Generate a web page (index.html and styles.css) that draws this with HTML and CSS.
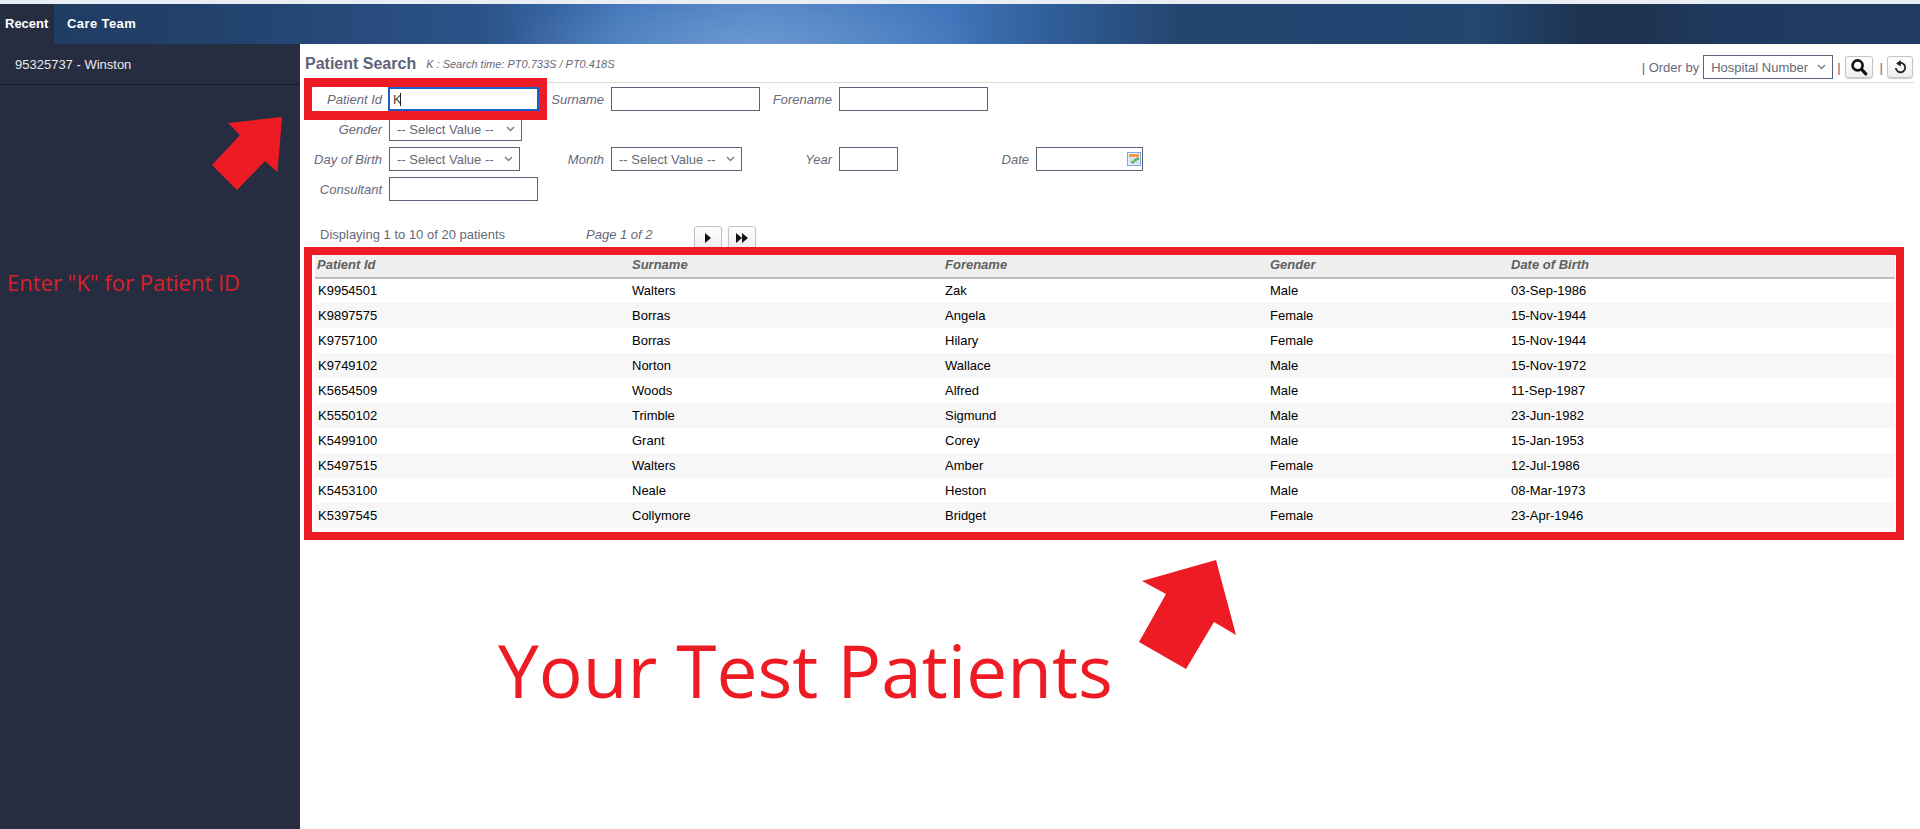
FILE: index.html
```html
<!DOCTYPE html>
<html lang="en">
<head>
<meta charset="utf-8">
<title>Patient Search</title>
<link rel="stylesheet" href="styles.css">
</head>
<body>
<div class="app">
  <header class="topbar">
    <a class="tab tab-active">Recent</a>
    <a class="tab tab-care">Care Team</a>
  </header>
  <div class="body">
    <aside class="sidebar">
      <div class="side-item">95325737 - Winston</div>
    </aside>
    <main class="content">
      <div class="title-bar">
        <h1 class="title">Patient Search</h1>
        <span class="search-time">K : Search time: PT0.733S / PT0.418S</span>
        <div class="order">
          <span>| Order by</span>
          <select class="field sel sel-order"><option>Hospital Number</option></select>
          <span>|</span>
          <button class="btn btn-search"><svg width="18" height="18" viewBox="0 0 18 18"><circle cx="7.6" cy="7.4" r="5" fill="none" stroke="#111" stroke-width="2.6"/><path d="M11.4 11.2l4.4 4.6" stroke="#111" stroke-width="3.2" stroke-linecap="round"/></svg></button>
          <span>|</span>
          <button class="btn btn-reset"><svg width="16" height="16" viewBox="0 0 16 16"><path d="M5.4 5a4.7 4.7 0 1 1-1.6 4" fill="none" stroke="#222" stroke-width="1.8"/><path d="M8.8 1v6.4L4.2 4.4z" fill="#222"/></svg></button>
        </div>
      </div>
      <form class="form">
        <label class="lbl">Patient Id</label><div class="id-wrap"><input class="field focus" value="K"></div>
        <label class="lbl">Surname</label><input class="field w-name">
        <label class="lbl">Forename</label><input class="field w-name span3">
        <label class="lbl">Gender</label><select class="field sel w-gender end-row"><option>-- Select Value --</option></select>
        <label class="lbl">Day of Birth</label><select class="field sel w-day"><option>-- Select Value --</option></select>
        <label class="lbl">Month</label><select class="field sel w-month"><option>-- Select Value --</option></select>
        <label class="lbl">Year</label><input class="field w-year">
        <label class="lbl">Date</label>
        <div class="date-wrap"><input class="field w-date"><svg class="cal" width="14" height="14" viewBox="0 0 14 14"><rect x=".5" y=".5" width="13" height="13" fill="#e8f0fa" stroke="#7fa6d6"/><rect x="2" y="2" width="10" height="3" fill="#f49a4c"/><path d="M2 6.5h10M2 8.5h10M2 10.5h10M4.5 5.5v6.5M7 5.5v6.5M9.5 5.5v6.5" stroke="#c3cdd9" stroke-width=".7"/><rect x="7" y="7" width="2.5" height="2.5" fill="#4fae4f"/><rect x="9.5" y="5.5" width="2.5" height="2.5" fill="#4fae4f"/><rect x="4.5" y="9" width="2.5" height="2.5" fill="#4fae4f"/></svg></div>
        <label class="lbl">Consultant</label><input class="field w-name">
      </form>
      <div class="pager">
        <span class="pager-info">Displaying 1 to 10 of 20 patients</span>
        <span class="pager-page">Page 1 of 2</span>
        <div class="pager-btns">
          <button class="btn btn-pg"><svg width="6" height="10" viewBox="0 0 6 10"><path d="M0 0l6 5-6 5z" fill="#111"/></svg></button>
          <button class="btn btn-pg"><svg width="12" height="10" viewBox="0 0 12 10"><path d="M0 0l6 5-6 5zM6 0l6 5-6 5z" fill="#111"/></svg></button>
        </div>
      </div>
      <table class="grid">
        <thead><tr><th>Patient Id</th><th>Surname</th><th>Forename</th><th>Gender</th><th>Date of Birth</th></tr></thead>
        <tbody>
          <tr><td>K9954501</td><td>Walters</td><td>Zak</td><td>Male</td><td>03-Sep-1986</td></tr>
          <tr><td>K9897575</td><td>Borras</td><td>Angela</td><td>Female</td><td>15-Nov-1944</td></tr>
          <tr><td>K9757100</td><td>Borras</td><td>Hilary</td><td>Female</td><td>15-Nov-1944</td></tr>
          <tr><td>K9749102</td><td>Norton</td><td>Wallace</td><td>Male</td><td>15-Nov-1972</td></tr>
          <tr><td>K5654509</td><td>Woods</td><td>Alfred</td><td>Male</td><td>11-Sep-1987</td></tr>
          <tr><td>K5550102</td><td>Trimble</td><td>Sigmund</td><td>Male</td><td>23-Jun-1982</td></tr>
          <tr><td>K5499100</td><td>Grant</td><td>Corey</td><td>Male</td><td>15-Jan-1953</td></tr>
          <tr><td>K5497515</td><td>Walters</td><td>Amber</td><td>Female</td><td>12-Jul-1986</td></tr>
          <tr><td>K5453100</td><td>Neale</td><td>Heston</td><td>Male</td><td>08-Mar-1973</td></tr>
          <tr><td>K5397545</td><td>Collymore</td><td>Bridget</td><td>Female</td><td>23-Apr-1946</td></tr>
        </tbody>
      </table>
    </main>
  </div>
</div>
<div class="ann ann-id"></div>
<div class="ann ann-table"></div>
<svg class="ann-svg" width="1920" height="829" viewBox="0 0 1920 829"><polygon fill="#ed1c24" points="228,123 282,117 277.5,172 265,161 237,190 212,165 240,135"/><polygon fill="#ed1c24" points="1142,581 1216,560 1236,635 1214,622 1186,669 1139,642 1166,594"/></svg>
<div class="ann-text ann-enter">Enter "K" for Patient ID</div>
<div class="ann-text ann-big">Your Test Patients</div>
</body>
</html>
```
FILE: styles.css
```css
* { box-sizing: border-box; }
html, body { margin: 0; height: 100%; overflow: hidden; }
body { background: #fff; font-family: "Liberation Sans", Arial, sans-serif; font-size: 13px; color: #666979; }
.app { height: 829px; display: flex; flex-direction: column; border-top: 4px solid #e9eef5; }
.topbar { height: 40px; flex: none; display: flex; background:
  radial-gradient(ellipse 240px 60px at 745px 40px, rgba(130,170,220,.55), rgba(130,170,220,0)),
  linear-gradient(90deg, #1f3b60 0, #21406a 180px, #2c5288 480px, #3f74b8 620px, #4f82c4 760px, #3f75bb 950px, #2f5c96 1060px, #244570 1180px, #224470 1400px, #234770 1480px, #1e3351 1580px, #1e3351 1640px, #1f3a5f 1720px, #1f3b61 1920px); }
.tab { color: #fff; font-weight: bold; line-height: 40px; padding: 0 5px; font-size: 13px; }
.tab-active { background: #262d40; width: 54px; }
.tab-care { margin-left: 8px; letter-spacing: .4px; }
.body { flex: 1; display: flex; min-height: 0; }
.sidebar { width: 300px; flex: none; background: #262d40; }
.side-item { height: 41px; line-height: 41px; padding-left: 15px; color: #e8e8ee; border-bottom: 1px solid #1a1f2e; }
.content { flex: 1; min-width: 0; padding: 0 6px 0 5px; }
.title-bar { height: 39px; display: flex; align-items: center; border-bottom: 1px solid #ddd; padding-top: 1px; }
.title { margin: 0; font-size: 16px; font-weight: bold; color: #5f6278; }
.search-time { font-style: italic; font-size: 11px; margin-left: 10px; }
.order { margin-left: auto; align-self: flex-end; display: flex; align-items: center; gap: 4px; padding-right: 1px; margin-bottom: 3px; }
.btn { width: 28px; height: 22px; padding: 0; border: 1px solid #c4c4c4; border-radius: 3px; background: linear-gradient(#fff, #eee); box-shadow: 0 1px 1px rgba(0,0,0,.2); display: flex; align-items: center; justify-content: center; }
.btn-search { margin-right: 3px; }
.btn-reset { width: 26px; margin-top: -1px; }
.field { height: 24px; border: 1px solid #5f6278; border-radius: 0; background: #fff; color: #666979; font: 13px "Liberation Sans", Arial, sans-serif; padding: 0 4px; outline: none; display: block; }
.sel { appearance: none; padding-left: 7px; background: #fff url("data:image/svg+xml,%3Csvg xmlns='http://www.w3.org/2000/svg' width='9' height='6'%3E%3Cpath d='M1 1l3.5 3.5L8 1' fill='none' stroke='%23777b90' stroke-width='1.4'/%3E%3C/svg%3E") no-repeat right 6px center; }
.sel-order { width: 130px; }
.form { display: grid; grid-template-columns: 84px 150px 72px 149px 79px 59px 138px 107px; grid-auto-rows: 24px; row-gap: 6px; padding-top: 4px; justify-content: start; }
.lbl { font-style: italic; text-align: right; padding-right: 7px; line-height: 25px; }
.id-wrap { position: relative; width: 151px; margin-left: -1px; }
.id-wrap::after { content: ""; position: absolute; left: 12px; top: 6px; width: 1px; height: 13px; background: #222; }
.focus { width: 151px; border: 2px solid #1a5fc8; color: #444; padding: 0 3px; }
.w-name { width: 149px; }
.span3 { grid-column: span 3; }
.w-gender { width: 133px; }
.end-row { grid-column: 2 / -1; }
.w-day { width: 131px; }
.w-month { width: 131px; }
.w-year { width: 59px; }
.w-date { width: 107px; }
.date-wrap { position: relative; width: 107px; }
.cal { position: absolute; right: 2px; top: 5px; }
.pager { height: 46px; display: flex; padding: 25px 0 0 15px; }
.pager-info { width: 266px; line-height: 18px; }
.pager-page { width: 108px; font-style: italic; line-height: 18px; }
.pager-btns { display: flex; gap: 6px; }
.btn-pg { width: 28px; height: 24px; }
.grid { width: 1580px; margin: 8px 0 0 10px; border-collapse: collapse; table-layout: fixed; color: #000; }
.grid th { height: 23px; text-align: left; font-style: italic; font-weight: bold; color: #5f5f5f; background: #efefef; border-bottom: 2px solid #bdbdbd; padding: 0 3px 3px; }
.grid th:first-child { padding-left: 2px; }
.grid th:nth-child(1), .grid td:nth-child(1) { width: 314px; }
.grid th:nth-child(2), .grid td:nth-child(2) { width: 313px; }
.grid th:nth-child(3), .grid td:nth-child(3) { width: 325px; }
.grid th:nth-child(4), .grid td:nth-child(4) { width: 241px; }
.grid td { height: 25px; padding: 0 3px 1px; }
.grid tbody tr:nth-child(even) td { background: #f7f7f7; }
.ann { position: absolute; border: 8px solid #ed1c24; }
.ann-id { left: 304px; top: 78px; width: 243px; height: 42px; border-width: 9px 8px; }
.ann-table { left: 304px; top: 247px; width: 1600px; height: 293px; }
.ann-svg { position: absolute; left: 0; top: 0; pointer-events: none; }
.ann-text { position: absolute; color: #ed1c24; font-family: "Open Sans", sans-serif; white-space: nowrap; }
.ann-enter { left: 7px; top: 267px; font-size: 22px; line-height: 30px; color: #dc2029; }
.ann-big { left: 498px; top: 620px; font-size: 73px; line-height: 100px; }
```
